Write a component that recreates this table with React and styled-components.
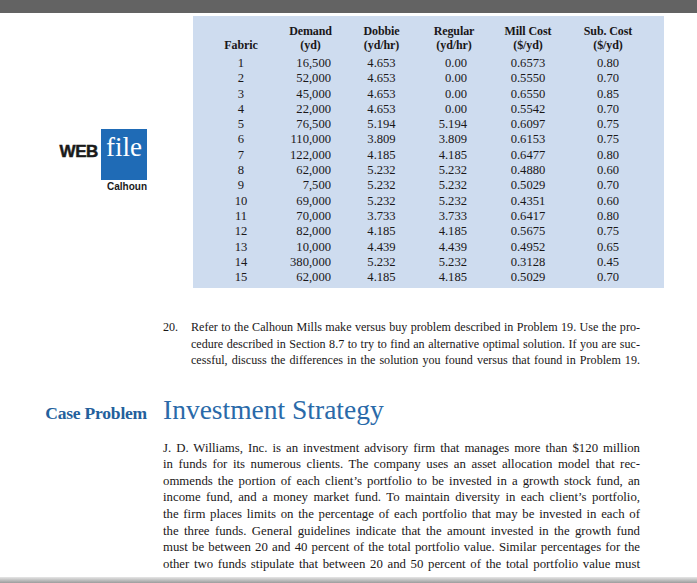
import styled, { createGlobalStyle } from "styled-components"

const GlobalStyle = createGlobalStyle`
    html, body {
        margin:0;
        padding:0;
        height:100%;
        overflow:hidden;
        background:#ffffff;
    }
    #root {
        height:100%;
    }
`

const Page = styled.div`
    height:100vh;
    display:flex;
    flex-direction:column;
    font-family:"Liberation Serif", "Times New Roman", serif;
    color:#1a1718;
    `

const TopBar = styled.div`
    height:13px;
    flex-shrink:0;
    background-color:#636363;
    `

const BottomBar = styled.div`
    height:6px;
    flex-shrink:0;
    background:linear-gradient(#e6e6e6, #9c9c9c);
    `

const Content = styled.div`
    flex:1;
    overflow:hidden;
    display:grid;
    grid-template-columns:163px 477px;
    align-content:start;
    `

const Margin = styled.div`
    display:flex;
    flex-direction:column;
    align-items:flex-end;
    padding-right:16px;
    padding-top:${props => props.top || 0}px;
    `

const Logo = styled.div`
    display:flex;
    align-items:center;
    gap:3px;
    `

const Web = styled.span`
    font-family:"Liberation Sans", Arial, sans-serif;
    font-weight:900;
    font-size:17px;
    letter-spacing:-0.4px;
    color:#1a1a1a;
    margin-bottom:5px;
    -webkit-text-stroke:0.5px #1a1a1a;
    `

const FileBox = styled.div`
    width:46px;
    height:51px;
    box-sizing:border-box;
    padding-top:5px;
    background-color:#1f6bb6;
    color:#ffffff;
    font-family:"Liberation Serif", "Times New Roman", serif;
    font-size:27px;
    line-height:26px;
    text-align:center;
    `

const LogoCaption = styled.span`
    margin-top:1px;
    font-family:"Liberation Sans", Arial, sans-serif;
    font-weight:bold;
    font-size:10px;
    line-height:12px;
    color:#1a1a1a;
    `

const Table = styled.div`
    margin-top:3px;
    margin-left:30px;
    width:471px;
    box-sizing:border-box;
    padding:8px 7px 3px 20px;
    background-color:#cedcef;
    display:grid;
    grid-template-columns:56px 83px 59px 86px 62px 98px;
    `

const Head = styled.div`
    display:flex;
    flex-direction:column;
    justify-content:flex-end;
    align-items:center;
    font-weight:bold;
    font-size:12px;
    line-height:14px;
    padding-bottom:4px;
    letter-spacing:-0.1px;
    `

const Cell = styled.div`
    font-size:12.6px;
    line-height:15.3px;
    text-align:${props => props.align || "center"};
    padding-right:${props => props.pr || 0}px;
    `

const Problem = styled.div`
    grid-column:2;
    margin-top:31px;
    display:flex;
    font-size:12.1px;
    line-height:16.4px;
    `

const ProblemNum = styled.div`
    width:28px;
    flex-shrink:0;
    `

const Lines = styled.div`
    flex:1;
    min-width:0;
    `

const Line = styled.span`
    display:block;
    white-space:nowrap;
    text-align:justify;
    text-align-last:justify;
    `

const CaseLabel = styled.div`
    font-weight:bold;
    font-size:17.5px;
    letter-spacing:-0.2px;
    color:#23609c;
    `

const CaseTitle = styled.h2`
    margin:0;
    font-weight:normal;
    font-size:27.5px;
    line-height:30px;
    color:#2a6aa9;
    `

const CaseRow = styled.div`
    grid-column:1 / span 2;
    margin-top:26px;
    display:grid;
    grid-template-columns:163px 477px;
    align-items:baseline;
    `

const Paragraph = styled.div`
    grid-column:2;
    margin-top:15px;
    font-size:12.8px;
    line-height:16.6px;
    `

const rows = [
    ["1", "16,500", "4.653", "0.00", "0.6573", "0.80"],
    ["2", "52,000", "4.653", "0.00", "0.5550", "0.70"],
    ["3", "45,000", "4.653", "0.00", "0.6550", "0.85"],
    ["4", "22,000", "4.653", "0.00", "0.5542", "0.70"],
    ["5", "76,500", "5.194", "5.194", "0.6097", "0.75"],
    ["6", "110,000", "3.809", "3.809", "0.6153", "0.75"],
    ["7", "122,000", "4.185", "4.185", "0.6477", "0.80"],
    ["8", "62,000", "5.232", "5.232", "0.4880", "0.60"],
    ["9", "7,500", "5.232", "5.232", "0.5029", "0.70"],
    ["10", "69,000", "5.232", "5.232", "0.4351", "0.60"],
    ["11", "70,000", "3.733", "3.733", "0.6417", "0.80"],
    ["12", "82,000", "4.185", "4.185", "0.5675", "0.75"],
    ["13", "10,000", "4.439", "4.439", "0.4952", "0.65"],
    ["14", "380,000", "5.232", "5.232", "0.3128", "0.45"],
    ["15", "62,000", "4.185", "4.185", "0.5029", "0.70"],
]

// alignment per column, demand and regular are right aligned
const cols = [
    { align: "center" },
    { align: "right", pr: 21 },
    { align: "center" },
    { align: "right", pr: 30 },
    { align: "center" },
    { align: "center" },
]

const heads = [
    ["Fabric"],
    ["Demand", "(yd)"],
    ["Dobbie", "(yd/hr)"],
    ["Regular", "(yd/hr)"],
    ["Mill Cost", "($/yd)"],
    ["Sub. Cost", "($/yd)"],
]

const problemLines = [
    "Refer to the Calhoun Mills make versus buy problem described in Problem 19. Use the pro-",
    "cedure described in Section 8.7 to try to find an alternative optimal solution. If you are suc-",
    "cessful, discuss the differences in the solution you found versus that found in Problem 19.",
]

const caseLines = [
    "J. D. Williams, Inc. is an investment advisory firm that manages more than $120 million",
    "in funds for its numerous clients. The company uses an asset allocation model that rec-",
    "ommends the portion of each client\u2019s portfolio to be invested in a growth stock fund, an",
    "income fund, and a money market fund. To maintain diversity in each client\u2019s portfolio,",
    "the firm places limits on the percentage of each portfolio that may be invested in each of",
    "the three funds. General guidelines indicate that the amount invested in the growth fund",
    "must be between 20 and 40 percent of the total portfolio value. Similar percentages for the",
    "other two funds stipulate that between 20 and 50 percent of the total portfolio value must",
]

export default function App() {
    return (
        <>
            <GlobalStyle />
            <Page>
                <TopBar />
                <Content>
                    <Margin top={116}>
                        <Logo>
                            <Web>WEB</Web>
                            <FileBox>file</FileBox>
                        </Logo>
                        <LogoCaption>Calhoun</LogoCaption>
                    </Margin>
                    <Table>
                        {heads.map((h, i) => (
                            <Head key={"h" + i}>
                                {h.map(t => <span key={t}>{t}</span>)}
                            </Head>
                        ))}
                        {rows.map((r, ri) =>
                            r.map((v, ci) => (
                                <Cell key={ri + "-" + ci} align={cols[ci].align} pr={cols[ci].pr}>{v}</Cell>
                            ))
                        )}
                    </Table>

                    <Problem>
                        <ProblemNum>20.</ProblemNum>
                        <Lines>
                            {problemLines.map(l => <Line key={l}>{l}</Line>)}
                        </Lines>
                    </Problem>

                    <CaseRow>
                        <Margin>
                            <CaseLabel>Case Problem</CaseLabel>
                        </Margin>
                        <CaseTitle>Investment Strategy</CaseTitle>
                    </CaseRow>

                    <Paragraph>
                        {caseLines.map(l => <Line key={l}>{l}</Line>)}
                    </Paragraph>
                </Content>
                <BottomBar />
            </Page>
        </>
    )
}
